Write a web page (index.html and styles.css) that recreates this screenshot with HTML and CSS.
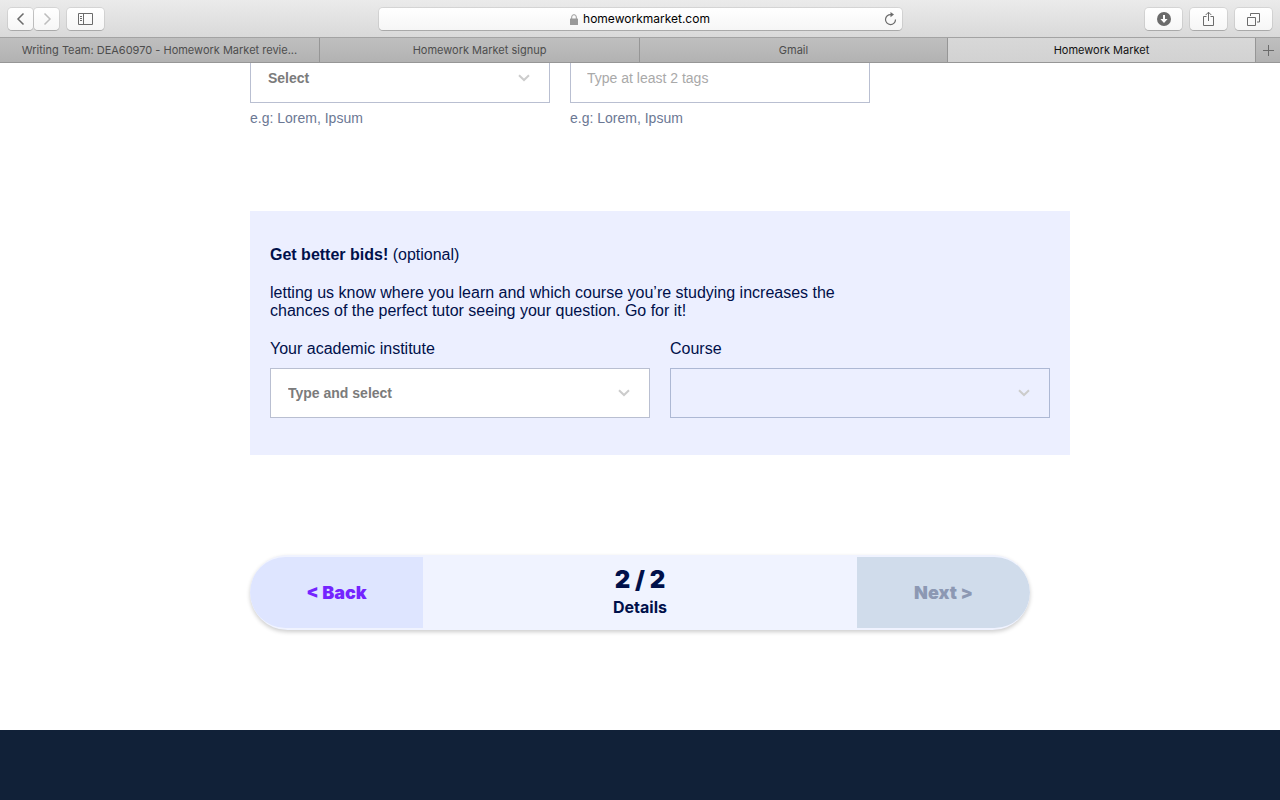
FILE: index.html
```html
<!DOCTYPE html>
<html lang="en">

<head>
    <meta charset="utf-8">
    <meta name="viewport" content="width=device-width, initial-scale=1.0">
    <title>Homework Market</title>
    <link rel="stylesheet" href="styles.css">
</head>

<body>
    <header class="browser">
        <div class="toolbar">
            <div class="tools">
                <div class="history">
                    <button class="tool" type="button" aria-label="Back">
                        <svg width="10" height="14" viewBox="0 0 10 14"><path d="M7.5 1.5 2 7l5.5 5.5" stroke-width="1.5" /></svg>
                    </button>
                    <button class="tool" type="button" aria-label="Forward" disabled>
                        <svg width="10" height="14" viewBox="0 0 10 14"><path d="M2.5 1.5 8 7l-5.5 5.5" stroke-width="1.5" /></svg>
                    </button>
                </div>
                <button class="tool wide" type="button" aria-label="Sidebar">
                    <svg width="15" height="13" viewBox="0 0 15 13"><path d="M.5 .5h14v11H.5zM5.5 .5v11M2 3.500h2M2 5.500h2M2 7.500h2" /></svg>
                </button>
            </div>
            <div class="address">
                <svg class="lock" width="8" height="11" viewBox="0 0 8 11"><rect y="4.5" width="8" height="6.5" rx=".5" /><path d="M1.7 5V3a2.3 2.3 0 0 1 4.6 0v2" /></svg>
                <span>homeworkmarket.com</span>
                <button class="reload" type="button" aria-label="Reload">
                    <svg width="13" height="14" viewBox="0 0 13 14"><path d="M7 2.6A5 5 0 1 0 11.5 7.5" stroke-width="1.2" /><path class="fill" d="M6.5 0v5.2L10 2.6z" /></svg>
                </button>
            </div>
            <div class="tools right">
                <button class="tool wide" type="button" aria-label="Downloads">
                    <svg width="14" height="14" viewBox="0 0 14 14"><circle class="fill" cx="7" cy="7" r="7" /><path class="arrow" d="M6 3h2v4h2.600L7 11 3.400 7H6z" /></svg>
                </button>
                <button class="tool wide" type="button" aria-label="Share">
                    <svg width="13" height="16" viewBox="0 0 13 16"><path d="M4.500 5.500H1.500v9h10v-9H8.500M6.500 10V1.200M3.700 4 6.500 1.200 9.300 4" /></svg>
                </button>
                <button class="tool wide" type="button" aria-label="Show all tabs">
                    <svg width="13" height="13" viewBox="0 0 13 13"><path d="M.5 4.500h8v8h-8zM3.500 3V.5h9v8.500H10" /></svg>
                </button>
            </div>
        </div>
        <nav class="tabs">
            <a class="tab" href="#">Writing Team: DEA60970 - Homework Market revie...</a>
            <a class="tab" href="#">Homework Market signup</a>
            <a class="tab" href="#">Gmail</a>
            <a class="tab active" href="#">Homework Market</a>
            <button class="new-tab" type="button" aria-label="New tab">
                <svg width="11" height="11" viewBox="0 0 11 11"><path d="M5.5 0v11M0 5.500h11" /></svg>
            </button>
        </nav>
    </header>

    <main>
        <form class="question">
            <div class="row">
                <div class="field">
                    <div class="select">
                        <select aria-label="Category" aria-describedby="category-hint"><option>Select</option></select>
                        <svg width="12" height="8" viewBox="0 0 12 8"><path d="M1 1.200 6 6 11 1.200" /></svg>
                    </div>
                    <p class="hint" id="category-hint">e.g: Lorem, Ipsum</p>
                </div>
                <div class="field">
                    <input class="text" type="text" placeholder="Type at least 2 tags" aria-label="Tags" aria-describedby="tags-hint">
                    <p class="hint" id="tags-hint">e.g: Lorem, Ipsum</p>
                </div>
            </div>

            <section class="bids">
                <h2><strong>Get better bids!</strong> (optional)</h2>
                <p>letting us know where you learn and which course you’re studying increases the chances of the perfect tutor seeing your question. Go for it!</p>
                <div class="columns">
                    <div class="field">
                        <label for="institute">Your academic institute</label>
                        <div class="select">
                            <select id="institute"><option>Type and select</option></select>
                            <svg width="12" height="8" viewBox="0 0 12 8"><path d="M1 1.200 6 6 11 1.200" /></svg>
                        </div>
                    </div>
                    <div class="field">
                        <label for="course">Course</label>
                        <div class="select">
                            <select id="course" disabled></select>
                            <svg width="12" height="8" viewBox="0 0 12 8"><path d="M1 1.200 6 6 11 1.200" /></svg>
                        </div>
                    </div>
                </div>
            </section>

            <div class="steps">
                <button class="step back" type="button">&lt; Back</button>
                <div class="progress">
                    <span class="count">2 / 2</span>
                    <span class="name">Details</span>
                </div>
                <button class="step next" type="submit" disabled>Next &gt;</button>
            </div>
        </form>
    </main>

    <footer></footer>
</body>

</html>
```
FILE: styles.css
```css
* {
    box-sizing: border-box;
}

body {
    margin: 0;
    min-height: 100vh;
    display: flex;
    flex-direction: column;
    font: 16px/18px "Liberation Sans", Arial, sans-serif;
    color: #00104a;
    background: #fff;
}

button {
    padding: 0;
    border: 0;
    font: inherit;
}

svg {
    fill: none;
    stroke: #6b6b6b;
}

.fill {
    fill: #6b6b6b;
    stroke: none;
}

.arrow {
    fill: #fff;
    stroke: none;
}

/* browser bar */
.browser {
    position: relative;
    z-index: 1;
    font-family: Inter, sans-serif;
}

.toolbar {
    height: 37px;
    padding: 1px 8px 0;
    display: grid;
    grid-template-columns: 1fr minmax(0, 523px) 1fr;
    align-items: center;
    background: linear-gradient(#ebebeb, #d9d9d9);
}

.tools {
    display: flex;
    gap: 8px;
}

.tools.right {
    justify-content: flex-end;
}

.history {
    display: flex;
    gap: 1px;
}

.tool {
    width: 25px;
    height: 22px;
    display: flex;
    align-items: center;
    justify-content: center;
    border-radius: 4px;
    background: linear-gradient(#fff, #f6f6f6);
    box-shadow: 0 0 0 1px rgba(0, 0, 0, 0.08), 0 1px 0 rgba(0, 0, 0, 0.16);
}

.tool:disabled svg {
    stroke: #bdbdbd;
}

.wide {
    width: 37px;
}

.address {
    position: relative;
    height: 22px;
    display: flex;
    align-items: center;
    justify-content: center;
    gap: 5px;
    font-size: 12px;
    color: #000;
    border-radius: 4px;
    background: linear-gradient(#fff, #f6f6f6);
    box-shadow: 0 0 0 1px rgba(0, 0, 0, 0.08), 0 1px 0 rgba(0, 0, 0, 0.16);
}

.lock {
    fill: #999;
    stroke: #999;
}

.lock rect {
    stroke: none;
}

.lock path {
    fill: none;
}

.reload {
    position: absolute;
    right: 5px;
    height: 14px;
    display: flex;
    background: none;
}

.tabs {
    height: 26px;
    display: grid;
    grid-template-columns: 320fr 320fr 308fr 308fr 24px;
    border-top: 1px solid #a3a3a3;
    border-bottom: 1px solid #969696;
    background: linear-gradient(#bfbfbf, #b2b2b2);
    font-size: 11px;
    line-height: 24px;
}

.tab {
    padding: 0 12px;
    overflow: hidden;
    white-space: nowrap;
    text-align: center;
    text-decoration: none;
    color: #4d4d4d;
    border-right: 1px solid #969696;
}

.tab.active {
    color: #111;
    background: linear-gradient(#d8d8d8, #d2d2d2);
}

.new-tab {
    display: flex;
    align-items: center;
    justify-content: center;
    background: none;
}

/* question form */
.question {
    max-width: 780px;
    margin: 0 auto;
}

/* the first row is partly scrolled under the browser bar */
.row {
    margin-top: -10px;
    display: grid;
    grid-template-columns: 300px 300px;
    gap: 20px;
}

.select {
    position: relative;
}

.select svg {
    position: absolute;
    right: 20px;
    top: 21px;
    stroke: #ccc;
    stroke-width: 2;
    pointer-events: none;
}

select,
.text {
    display: block;
    width: 100%;
    height: 50px;
    padding: 0 17px;
    appearance: none;
    border: 1px solid #b9bfd1;
    border-radius: 0;
    background: #fff;
    font: bold 14px "Liberation Sans", Arial, sans-serif;
    color: #7b7b7b;
}

.text {
    padding: 0 16px;
    font-weight: normal;
}

.text::placeholder {
    color: #a9a9a9;
}

select:disabled {
    border-color: #adb8d4;
    background: #ecefff;
    opacity: 1;
}

.hint {
    margin: 6px 0 0;
    font-size: 14px;
    color: #6b7894;
}

.bids {
    width: 820px;
    margin: 84px 0 100px;
    padding: 35px 20px 37px;
    background: #ecefff;
}

.bids h2 {
    margin: 0;
    font-size: 16px;
    font-weight: normal;
}

.bids p {
    max-width: 600px;
    margin: 20px 0;
}

.columns {
    display: grid;
    grid-template-columns: 1fr 1fr;
    gap: 20px;
}

label {
    display: block;
    margin-bottom: 10px;
}

.steps {
    height: 75px;
    margin-bottom: 100px;
    padding: 2px 0;
    display: flex;
    border-radius: 38px;
    background: #f0f3ff;
    box-shadow: 0 2px 4px rgba(0, 0, 0, 0.2);
    font-family: Inter, sans-serif;
    overflow: hidden;
}

.step {
    width: 173px;
    font-size: 18px;
    font-weight: 900;
}

.back {
    border-radius: 36px 0 0 36px;
    color: #7424ff;
    background: #dee5ff;
}

.next {
    border-radius: 0 36px 36px 0;
    color: #8c98b3;
    background: #d0dceb;
}

.progress {
    flex: 1;
    padding-bottom: 4px;
    display: flex;
    flex-direction: column;
    align-items: center;
    justify-content: center;
    gap: 4px;
}

.count {
    font-size: 24px;
    line-height: 28px;
    font-weight: 900;
}

.name {
    font-weight: bold;
}

footer {
    flex: 1;
    min-height: 70px;
    background: #112138;
}
```
